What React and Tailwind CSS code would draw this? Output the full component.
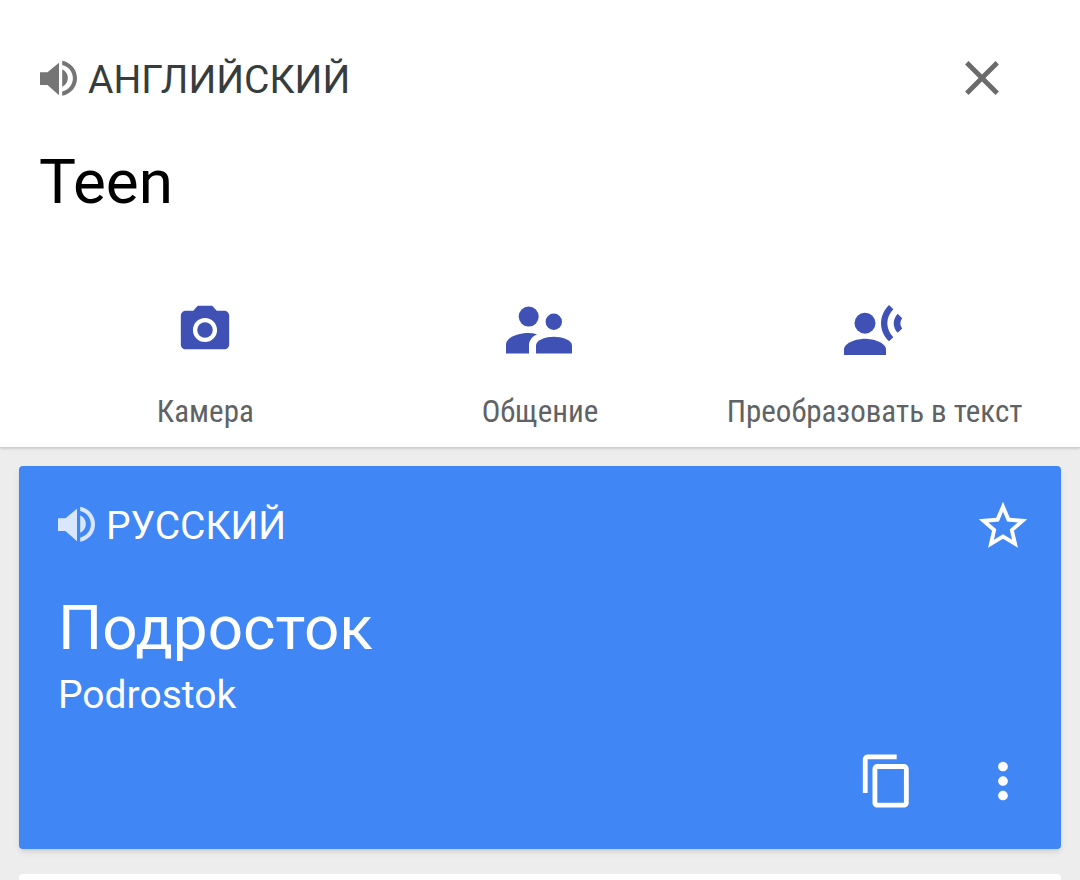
import clsx from "clsx";
import React from "react";
import { MdCameraAlt, MdClose, MdContentCopy, MdMoreVert, MdStarBorder } from "react-icons/md";

const SpeakerIcon = ({ className }) => (
  <svg viewBox="0 0 38 40" className={clsx("w-[38px] h-10 shrink-0", className)} fill="currentColor" aria-hidden="true">
    <path d="M0 12.3h7.5L19 2.8v32.4L7.5 25H0z" />
    <path d="M22.2 9.3c3.4 1.6 5.6 5 5.6 8.8s-2.2 7.1-5.6 8.7z" />
    <path d="M22.2 0.7C30.7 2.2 37 9.5 37 18.2s-6.3 16-14.8 17.5v-4.2c6.2-1.4 10.7-6.8 10.7-13.3S28.4 6.3 22.2 4.9z" />
  </svg>
);

const PeopleIcon = () => (
  <svg viewBox="1 0 72 58" className="w-[72px] h-[58px]" fill="currentColor" aria-hidden="true">
    <circle cx="25.7" cy="15.6" r="10" />
    <circle cx="50.8" cy="20.7" r="8.2" />
    <path d="M3 52.5V43.5C3 36 16 32 25 32c3.300 0 6.300.4 9 1.200-5 2.300-8 6.300-8 11.300V52.500z" />
    <path d="M33 52.500v-8c0-6 10-8.800 17.800-8.800S69 38.500 69 44.500V52.500z" />
  </svg>
);

const VoiceIcon = () => (
  <svg viewBox="1 0 72 58" className="w-[72px] h-[58px]" fill="currentColor" aria-hidden="true">
    <circle cx="27" cy="22.2" r="10.5" />
    <path d="M6 54v-5.5c0-7 13-10.8 21-10.8s21 3.8 21 10.8V54z" />
    <path d="M51 4l4.3 4.3c-8 8.2-8 19.6 0 27.9L51 40.3C40.4 30 40.4 14.5 51 4z" />
    <path d="M59.7 12.7l4.5 4.5c-2.5 3.3-2.5 7 0 10.3l-4.5 4.3c-5.3-5.6-5.3-13.3 0-19.1z" />
  </svg>
);

const TOOLS = [
  { label: "Камера", icon: <MdCameraAlt className="size-[58px]" /> },
  { label: "Общение", icon: <PeopleIcon /> },
  { label: "Преобразовать в текст", icon: <VoiceIcon /> },
];

const Language = ({ name, iconClass }) => (
  <button type="button" className="flex items-center gap-2.5 text-[39px] leading-[62px]">
    <SpeakerIcon className={iconClass} />
    {name}
  </button>
);

const SourcePanel = () => (
  <section className="bg-white border-b border-[#cfcfcf] pt-[49px] pb-[15px] shadow-sm">
    <div className="flex items-start justify-between pl-10 pr-[69px] text-[#373c3c]">
      <Language name="АНГЛИЙСКИЙ" iconClass="text-[#757575]" />
      <button type="button" aria-label="Очистить" className="text-[#6b6b6b]">
        <MdClose className="size-[58px]" />
      </button>
    </div>

    <div className="mt-[35px] px-[39px]">
      <input
        type="text"
        aria-label="Исходный текст"
        defaultValue="Teen"
        className="block w-full h-[72px] text-[62px] leading-[72px] text-black outline-none"
      />
    </div>

    <div className="mt-[83px] px-[38px] grid grid-cols-3">
      {TOOLS.map(({ label, icon }) => (
        <button key={label} type="button" className="flex flex-col items-center gap-[33px] text-[#3f51b5]">
          {icon}
          <span className="font-['Roboto_Condensed',Roboto,sans-serif] text-[31px] leading-10 whitespace-nowrap text-[#5f6365]">
            {label}
          </span>
        </button>
      ))}
    </div>
  </section>
);

const ResultCard = () => (
  <section className="bg-[#4086f4] text-white rounded-sm pt-[29px] pb-[39px] pl-[39px] pr-[29px] shadow-md">
    <div className="flex items-center justify-between">
      <Language name="РУССКИЙ" iconClass="text-[#d9e7fd]" />
      <button type="button" aria-label="В избранное">
        <MdStarBorder className="size-[58px]" />
      </button>
    </div>

    <p className="mt-[35px] text-[62px] leading-[72px]">Подросток</p>
    <p className="mt-[7px] text-[39px] leading-[48px]">Podrostok</p>

    <div className="mt-[33px] flex justify-end gap-[58px]">
      <button type="button" aria-label="Копировать">
        <MdContentCopy className="size-[58px]" />
      </button>
      <button type="button" aria-label="Ещё">
        <MdMoreVert className="size-[58px]" />
      </button>
    </div>
  </section>
);

const App = () => (
  <div className="h-screen overflow-hidden bg-[#ededed] font-[Roboto,sans-serif]">
    <SourcePanel />

    <main className="px-[19px] pt-[18px] flex flex-col gap-[25px]">
      <ResultCard />
      <div className="h-40 bg-white rounded-sm" />
    </main>
  </div>
);

export default App;
